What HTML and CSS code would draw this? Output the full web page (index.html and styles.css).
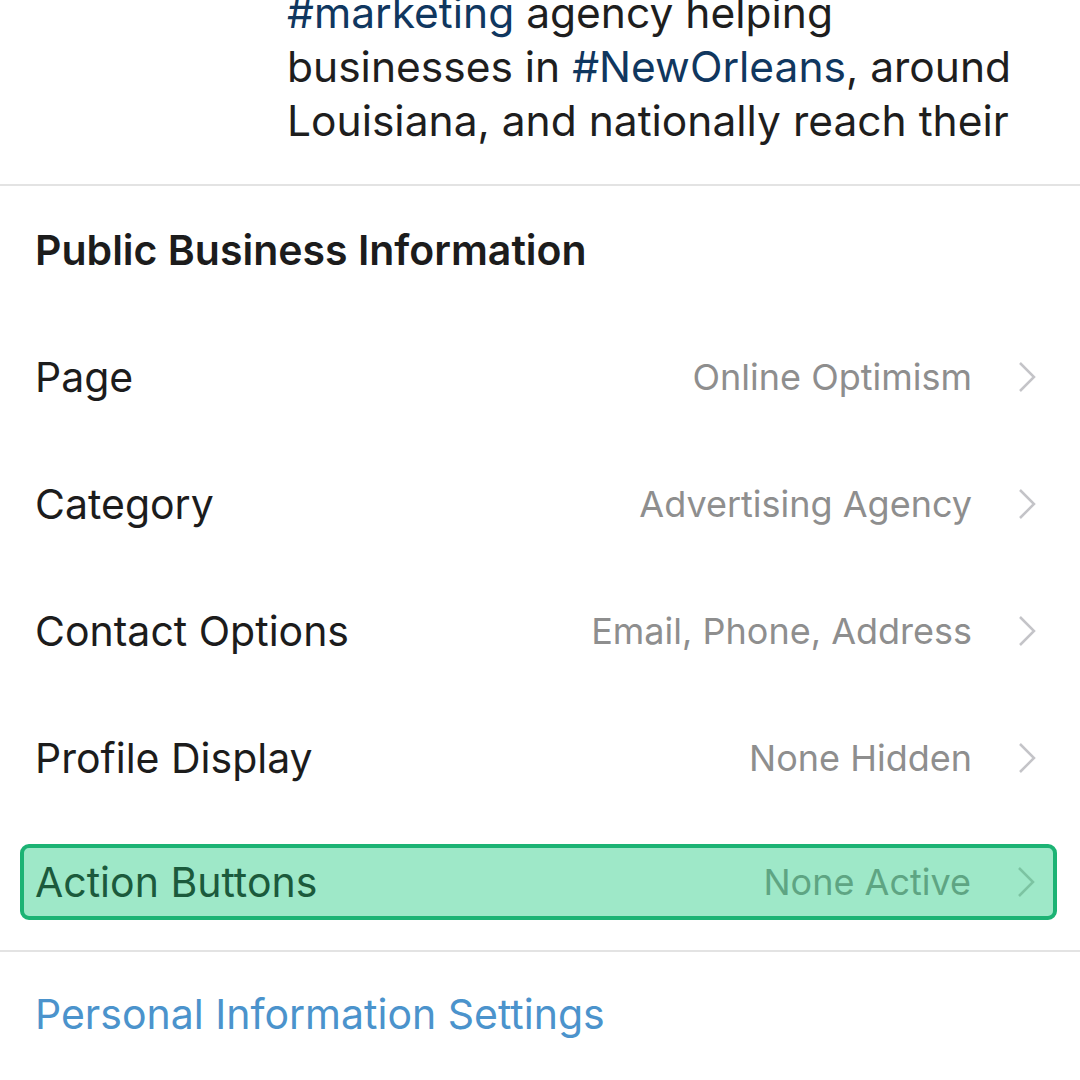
FILE: index.html
```html
<!DOCTYPE html>
<html lang="en">
<head>
    <meta charset="UTF-8">
    <meta name="viewport" content="width=device-width, initial-scale=1.0">
    <title>Edit Profile</title>
    <link rel="stylesheet" href="styles.css">
</head>
<body>
    <!-- bio cut off at the top of the screen -->
    <div class="bio">
        <p class="bio-text"><span class="tag">#marketing</span> agency helping<br>businesses in <span class="tag">#NewOrleans</span>, around<br>Louisiana, and nationally reach their</p>
    </div>

    <section class="info">
        <h2 class="info-title">Public Business Information</h2>

        <div class="row">
            <span class="row-label">Page</span>
            <span class="row-value">Online Optimism</span>
            <svg class="chevron" viewBox="0 0 18 32"><path d="M2 2 L16 16 L2 30" /></svg>
        </div>
        <div class="row">
            <span class="row-label">Category</span>
            <span class="row-value">Advertising Agency</span>
            <svg class="chevron" viewBox="0 0 18 32"><path d="M2 2 L16 16 L2 30" /></svg>
        </div>
        <div class="row">
            <span class="row-label">Contact Options</span>
            <span class="row-value">Email, Phone, Address</span>
            <svg class="chevron" viewBox="0 0 18 32"><path d="M2 2 L16 16 L2 30" /></svg>
        </div>
        <div class="row">
            <span class="row-label">Profile Display</span>
            <span class="row-value">None Hidden</span>
            <svg class="chevron" viewBox="0 0 18 32"><path d="M2 2 L16 16 L2 30" /></svg>
        </div>
        <div class="row row-highlight">
            <span class="row-label">Action Buttons</span>
            <span class="row-value">None Active</span>
            <svg class="chevron" viewBox="0 0 18 32"><path d="M2 2 L16 16 L2 30" /></svg>
        </div>
    </section>

    <a class="settings-link" href="#">Personal Information Settings</a>
</body>
</html>
```

FILE: styles.css
```css
/* base */
body {
    margin: 0;
    background: #fff;
    font-family: "Inter", "Liberation Sans", sans-serif;
    color: #1c1c1c;
    width: 1080px;
    height: 1080px;
    overflow: hidden;
}

/* bio */
.bio {
    height: 184px;
    border-bottom: 2px solid #e3e3e3;
    overflow: hidden;
    position: relative;
}

.bio-text {
    margin: 0;
    position: absolute;
    bottom: 36px;
    left: 287px;
    width: 780px;
    font-size: 42.5px;
    line-height: 54px;
    color: #1e1e1e;
}

.tag {
    color: #10375f;
}

/* public business info */
.info {
    border-bottom: 2px solid #e3e3e3;
}

.info-title {
    margin: 0;
    padding: 42px 35px 41px;
    font-size: 41px;
    font-weight: 600;
    color: #1c1c1c;
    line-height: 44px;
}

.row {
    display: flex;
    align-items: center;
    height: 127px;
    padding: 0 44px 0 35px;
    font-size: 41px;
}

.row-label {
    flex: 1;
    color: #1c1c1c;
}

.row-value {
    color: #8e8e8e;
    font-size: 36px;
    margin-right: 46px;
}

.chevron {
    width: 18px;
    height: 32px;
    fill: none;
    stroke: #c4c4c8;
    stroke-width: 2.5;
}

.row-highlight {
    height: 68px;
    margin: 23px 23px 30px 20px;
    padding: 0 18px 0 11px;
    background: #9ee8c8;
    border: 4px solid #1cb374;
    border-radius: 9px;
}

.row-highlight .row-label {
    color: #1b5a3c;
}

.row-highlight .row-value {
    color: #5ea583;
}

.row-highlight .chevron {
    stroke: #7cc4a2;
}

/* bottom link */
.settings-link {
    display: block;
    padding: 38px 35px;
    font-size: 41px;
    line-height: 48px;
    color: #4b93cc;
    text-decoration: none;
}
```
